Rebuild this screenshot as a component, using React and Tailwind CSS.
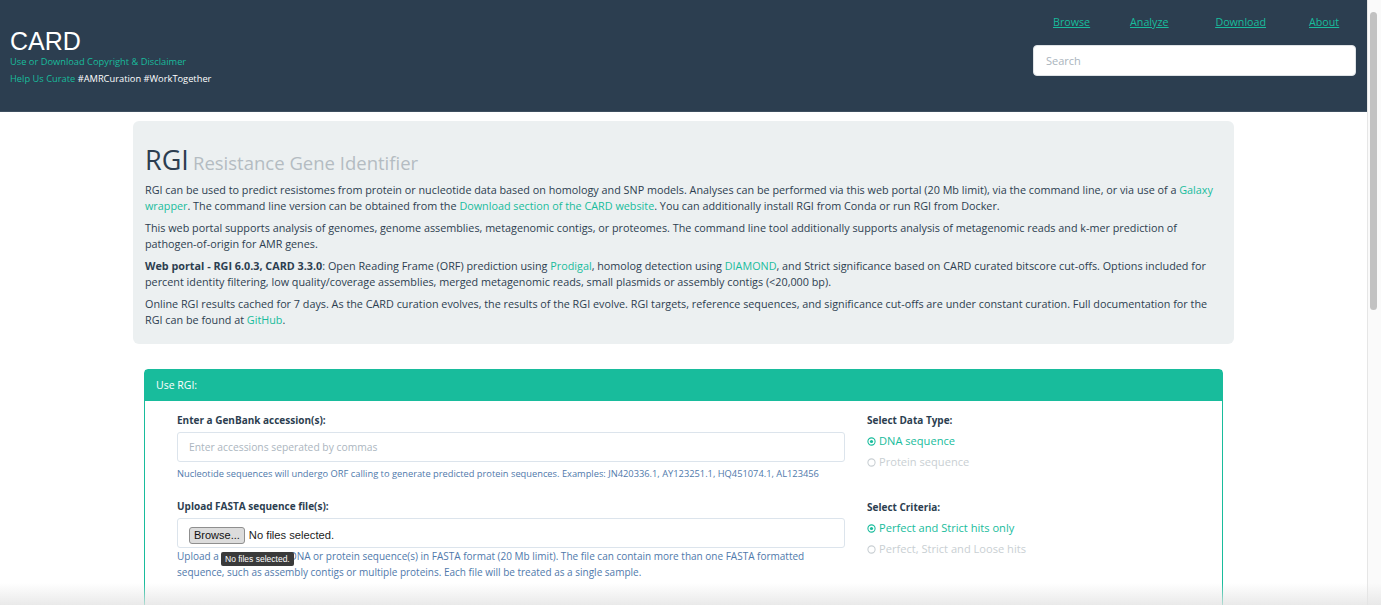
import React from 'react';

const TEAL = 'text-[#18bc9c]';

function Radio({ checked, children }) {
  return (
    <div
      className={`flex items-center h-[21px] text-[11.1px] ${
        checked ? 'text-[#18bc9c]' : 'text-[#c9cfd3]'
      }`}
    >
      <svg width="9" height="9" viewBox="0 0 10 10" className="mr-[3px]">
        <circle cx="5" cy="5" r="4" fill="none" stroke="currentColor" strokeWidth="1.2" />
        {checked && <circle cx="5" cy="5" r="1.8" fill="currentColor" />}
      </svg>
      {children}
    </div>
  );
}

export default function App() {
  return (
    <div className="h-[605px] w-full overflow-hidden flex bg-white font-['Open_Sans',sans-serif] relative">
      {/* PAGE */}
      <div className="flex-1 min-w-0">
        {/* HEADER */}
        <header className="h-[112px] bg-[#2c3e50] border-b border-[#3e4f60] flex justify-between">
          <div className="pl-[10px] pt-[28px]">
            <div className="font-['Liberation_Sans',Arial,sans-serif] text-white text-[25px] leading-[26px]">
              CARD
            </div>
            <div className="text-[9.3px] leading-[17px] mt-[-1px]">
              <div className={TEAL}>Use or Download Copyright &amp; Disclaimer</div>
              <div>
                <span className={TEAL}>Help Us Curate</span>{' '}
                <span className="text-white">#AMRCuration #WorkTogether</span>
              </div>
            </div>
          </div>

          <div className="w-[323px] mr-[11px] pt-[14px]">
            <nav className="flex text-[10.7px] leading-[16px] pl-[20px] underline text-[#18bc9c]">
              <a>Browse</a>
              <a className="ml-[40px]">Analyze</a>
              <a className="ml-[47px]">Download</a>
              <a className="ml-[43px]">About</a>
            </nav>
            <input
              placeholder="Search"
              className="mt-[15px] w-full h-[31px] rounded-[4px] bg-white border border-[#dfe3e6] pl-[12px] text-[11px] placeholder:text-[#aab4bd] outline-none"
            />
          </div>
        </header>

        {/* CONTENT */}
        <main className="w-[1101px] mx-auto pt-[9px]">
          {/* JUMBOTRON */}
          <section className="bg-[#ecf0f1] rounded-[6px] pl-[12px] pr-[12px] pt-[22px] pb-[17px] text-[#2c3e50]">
            <h1 className="leading-[34px] mb-[1px]">
              <span className="text-[27px] text-[#2c3e50]">RGI</span>{' '}
              <span className="text-[18.5px] text-[#b4bcc2]">Resistance Gene Identifier</span>
            </h1>
            <div className="text-[10.8px] leading-[15.5px] space-y-[7px]">
              <p>
                RGI can be used to predict resistomes from protein or nucleotide data based on homology and SNP models. Analyses can be performed via this web portal (20 Mb limit), via the command line, or via use of a{' '}
                <a className={TEAL}>Galaxy wrapper</a>. The command line version can be obtained from the{' '}
                <a className={TEAL}>Download section of the CARD website</a>. You can additionally install RGI from Conda or run RGI from Docker.
              </p>
              <p>
                This web portal supports analysis of genomes, genome assemblies, metagenomic contigs, or proteomes. The command line tool additionally supports analysis of metagenomic reads and k-mer prediction of pathogen-of-origin for AMR genes.
              </p>
              <p>
                <b>Web portal - RGI 6.0.3, CARD 3.3.0</b>: Open Reading Frame (ORF) prediction using{' '}
                <a className={TEAL}>Prodigal</a>, homolog detection using{' '}
                <a className={TEAL}>DIAMOND</a>, and Strict significance based on CARD curated bitscore cut-offs. Options included for percent identity filtering, low quality/coverage assemblies, merged metagenomic reads, small plasmids or assembly contigs (&lt;20,000 bp).
              </p>
              <p>
                Online RGI results cached for 7 days. As the CARD curation evolves, the results of the RGI evolve. RGI targets, reference sequences, and significance cut-offs are under constant curation. Full documentation for the RGI can be found at{' '}
                <a className={TEAL}>GitHub</a>.
              </p>
            </div>
          </section>

          {/* USE RGI PANEL */}
          <section className="mx-[11px] mt-[25px] border border-[#18bc9c] rounded-t-[4px] h-[260px]">
            <div className="bg-[#18bc9c] h-[31px] flex items-center pl-[11px] text-white text-[10.5px]">
              Use RGI:
            </div>
            <div className="flex pl-[32px] pt-[11px]">
              {/* LEFT */}
              <div className="w-[668px] text-[#2c3e50]">
                <label className="block font-bold text-[10px] leading-[16px] mb-[4px]">
                  Enter a GenBank accession(s):
                </label>
                <input
                  placeholder="Enter accessions seperated by commas"
                  className="w-full h-[30px] border border-[#dce4ec] rounded-[3px] pl-[11px] text-[10.3px] placeholder:text-[#acb6c0] outline-none"
                />
                <p className="mt-[4px] text-[9.3px] leading-[15px] text-[#4f79ab]">
                  Nucleotide sequences will undergo ORF calling to generate predicted protein sequences. Examples: JN420336.1, AY123251.1, HQ451074.1, AL123456
                </p>

                <label className="block font-bold text-[10px] leading-[16px] mt-[17px] mb-[4px]">
                  Upload FASTA sequence file(s):
                </label>
                <div className="relative w-full h-[30px] border border-[#dce4ec] rounded-[3px] flex items-center pl-[11px] pt-[4px] font-['Liberation_Sans',Arial,sans-serif]">
                  <span className="h-[17px] px-[4px] flex items-center bg-[#dcdcdc] border border-[#8f8f8f] rounded-[3px] text-[11px] text-[#111]">
                    Browse...
                  </span>
                  <span className="ml-[4px] text-[11.2px] text-[#222]">No files selected.</span>
                  <span className="absolute left-[43px] top-[33px] h-[14px] px-[4px] flex items-center bg-[#3a3a3a] text-white text-[8.5px] rounded-[2px] z-10">
                    No files selected.
                  </span>
                </div>
                <p className="mt-0 text-[10px] leading-[16px] text-[#4f79ab]">
                  Upload a file containing DNA or protein sequence(s) in FASTA format (20 Mb limit). The file can contain more than one FASTA formatted sequence, such as assembly contigs or multiple proteins. Each file will be treated as a single sample.
                </p>
              </div>

              {/* RIGHT */}
              <div className="ml-[22px] flex-1">
                <div className="font-bold text-[10px] leading-[16px] mb-[3px] text-[#2c3e50]">
                  Select Data Type:
                </div>
                <Radio checked>DNA sequence</Radio>
                <Radio>Protein sequence</Radio>

                <div className="font-bold text-[10px] leading-[16px] mt-[26px] mb-[3px] text-[#2c3e50]">
                  Select Criteria:
                </div>
                <Radio checked>Perfect and Strict hits only</Radio>
                <Radio>Perfect, Strict and Loose hits</Radio>
              </div>
            </div>
          </section>
        </main>
      </div>

      {/* SCROLLBAR */}
      <div className="w-[14px] h-full bg-[#fafafa] border-l border-[#e6e6e6] pt-[12px] pl-[2px]">
        <div className="w-[7px] h-[298px] rounded-full bg-[#c2c2c2]" />
      </div>

      {/* bottom window shade */}
      <div className="pointer-events-none absolute left-0 right-0 bottom-0 h-[22px] bg-gradient-to-b from-transparent to-[#e4e4e4]/80" />
    </div>
  );
}
